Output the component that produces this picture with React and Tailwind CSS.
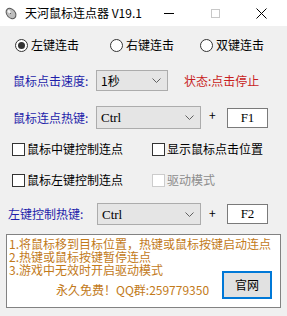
import React from "react";

const cjk = "font-['Noto_Sans_CJK_SC',sans-serif]";

const Radio = ({ checked, label, className = "" }) => (
  <div className={`flex items-center ${className}`}>
    <span className="w-[13px] h-[13px] rounded-full border border-[#333] bg-white flex items-center justify-center">
      {checked && <span className="w-[7px] h-[7px] rounded-full bg-[#333]" />}
    </span>
    <span className="ml-[3px] text-[12px] leading-none text-black">{label}</span>
  </div>
);

const Check = ({ label, disabled, className = "" }) => (
  <div className={`flex items-center ${className}`}>
    <span
      className={`w-[13px] h-[13px] border bg-white ${
        disabled ? "border-[#cccccc]" : "border-[#333]"
      }`}
    />
    <span
      className={`ml-[2px] text-[12px] leading-none ${
        disabled ? "text-[#8d8d8d]" : "text-black"
      }`}
    >
      {label}
    </span>
  </div>
);

const Chevron = () => (
  <svg width="9" height="5" viewBox="0 0 9 5" className="shrink-0">
    <path d="M0.5 0.5 L4.5 4.5 L8.5 0.5" fill="none" stroke="#606060" strokeWidth="1" />
  </svg>
);

const Select = ({ value, width, height, mono }) => (
  <div
    className={`flex items-center justify-between border border-[#acacac] bg-[#e5e5e5] pl-[4px] pr-[6px] ${width} ${height}`}
  >
    <span
      className={`text-[12px] leading-none text-black ${
        mono ? "font-['Liberation_Serif',serif] text-[13px]" : ""
      }`}
    >
      {value}
    </span>
    <Chevron />
  </div>
);

const KeyBox = ({ k }) => (
  <div className="w-[41px] h-[20px] border border-[#7a7a7a] bg-white flex items-center justify-center font-['Liberation_Serif',serif] text-[13px] text-black">
    {k}
  </div>
);

export default function App() {
  return (
    <div className={`w-[287px] h-[316px] bg-[#f0f0f0] overflow-hidden ${cjk}`}>
      {/* title bar */}
      <div className="h-[26px] bg-white flex items-center">
        <svg width="14" height="14" viewBox="0 0 14 14" className="ml-[4px]">
          <ellipse cx="7" cy="7.5" rx="4.2" ry="5.8" transform="rotate(-40 7 7.5)" fill="#bdbdbd" stroke="#555" strokeWidth="1" />
          <path d="M3.5 4.5 L7 8" stroke="#555" strokeWidth="1" />
          <ellipse cx="5" cy="5.5" rx="1.3" ry="2" transform="rotate(-40 5 5.5)" fill="#f4f4f4" />
        </svg>
        <span className="ml-[7px] text-[12px] leading-none text-black">天河鼠标连点器 V19.1</span>
        <span className="ml-auto w-[10px] h-px bg-black mr-[37px]" />
        <span className="w-[9px] h-[9px] border border-[#c8c8c8] mr-[36px]" />
        <svg width="11" height="11" viewBox="0 0 11 11" className="mr-[20px]">
          <path d="M0.5 0.5 L10.5 10.5 M10.5 0.5 L0.5 10.5" stroke="#000" strokeWidth="1" />
        </svg>
      </div>

      {/* radios */}
      <div className="mt-[11px] h-[16px] flex items-center pl-[15px]">
        <Radio checked label="左键连击" className="w-[95px]" />
        <Radio label="右键连击" className="w-[90px]" />
        <Radio label="双键连击" />
      </div>

      {/* speed */}
      <div className="mt-[17px] h-[21px] flex items-center">
        <span className="ml-[13px] w-[83px] text-[12px] leading-none text-[#1e1eaa]">鼠标点击速度:</span>
        <Select value="1秒" width="w-[72px]" height="h-[21px]" />
        <span className="ml-[16px] text-[12px] leading-none text-[#c81e1e]">状态:点击停止</span>
      </div>

      {/* hotkey */}
      <div className="mt-[15px] h-[23px] flex items-center">
        <span className="ml-[13px] w-[83px] text-[12px] leading-none text-[#1e1eaa]">鼠标连点热键:</span>
        <Select value="Ctrl" width="w-[105px]" height="h-[23px]" mono />
        <span className="ml-[8px] w-[18px] text-[12px] leading-none text-black -mt-[5px]">+</span>
        <KeyBox k="F1" />
      </div>

      {/* checkboxes */}
      <div className="mt-[12px] h-[16px] flex items-center pl-[12px]">
        <Check label="鼠标中键控制连点" className="w-[140px]" />
        <Check label="显示鼠标点击位置" />
      </div>
      <div className="mt-[15px] h-[16px] flex items-center pl-[12px]">
        <Check label="鼠标左键控制连点" className="w-[140px]" />
        <Check label="驱动模式" disabled />
      </div>

      {/* left hotkey */}
      <div className="mt-[15px] h-[22px] flex items-center">
        <span className="ml-[8px] w-[89px] text-[12px] leading-none text-[#1e1eaa]">左键控制热键:</span>
        <Select value="Ctrl" width="w-[104px]" height="h-[22px]" mono />
        <span className="ml-[8px] w-[18px] text-[12px] leading-none text-black -mt-[3px]">+</span>
        <KeyBox k="F2" />
      </div>

      {/* info box */}
      <div className="mt-[9px] ml-[6px] w-[275px] h-[74px] border border-[#828282] bg-white pl-[2px] pt-[2px] text-[#c27a1a]">
        <div className="text-[12px] leading-[13px]">1.将鼠标移到目标位置，热键或鼠标按键启动连点</div>
        <div className="text-[12px] leading-[13px]">2.热键或鼠标按键暂停连点</div>
        <div className="text-[12px] leading-[13px]">3.游戏中无效时开启驱动模式</div>
        <div className="flex items-center">
          <span className="ml-[47px] mt-[5px] text-[12px] leading-none">永久免费！QQ群:259779350</span>
          <div className="ml-auto mr-[8px] -mt-[5px] w-[50px] h-[28px] border-2 border-[#0078d7] bg-[#e1e1e1] flex items-center justify-center text-[12px] text-black">
            官网
          </div>
        </div>
      </div>
    </div>
  );
}
